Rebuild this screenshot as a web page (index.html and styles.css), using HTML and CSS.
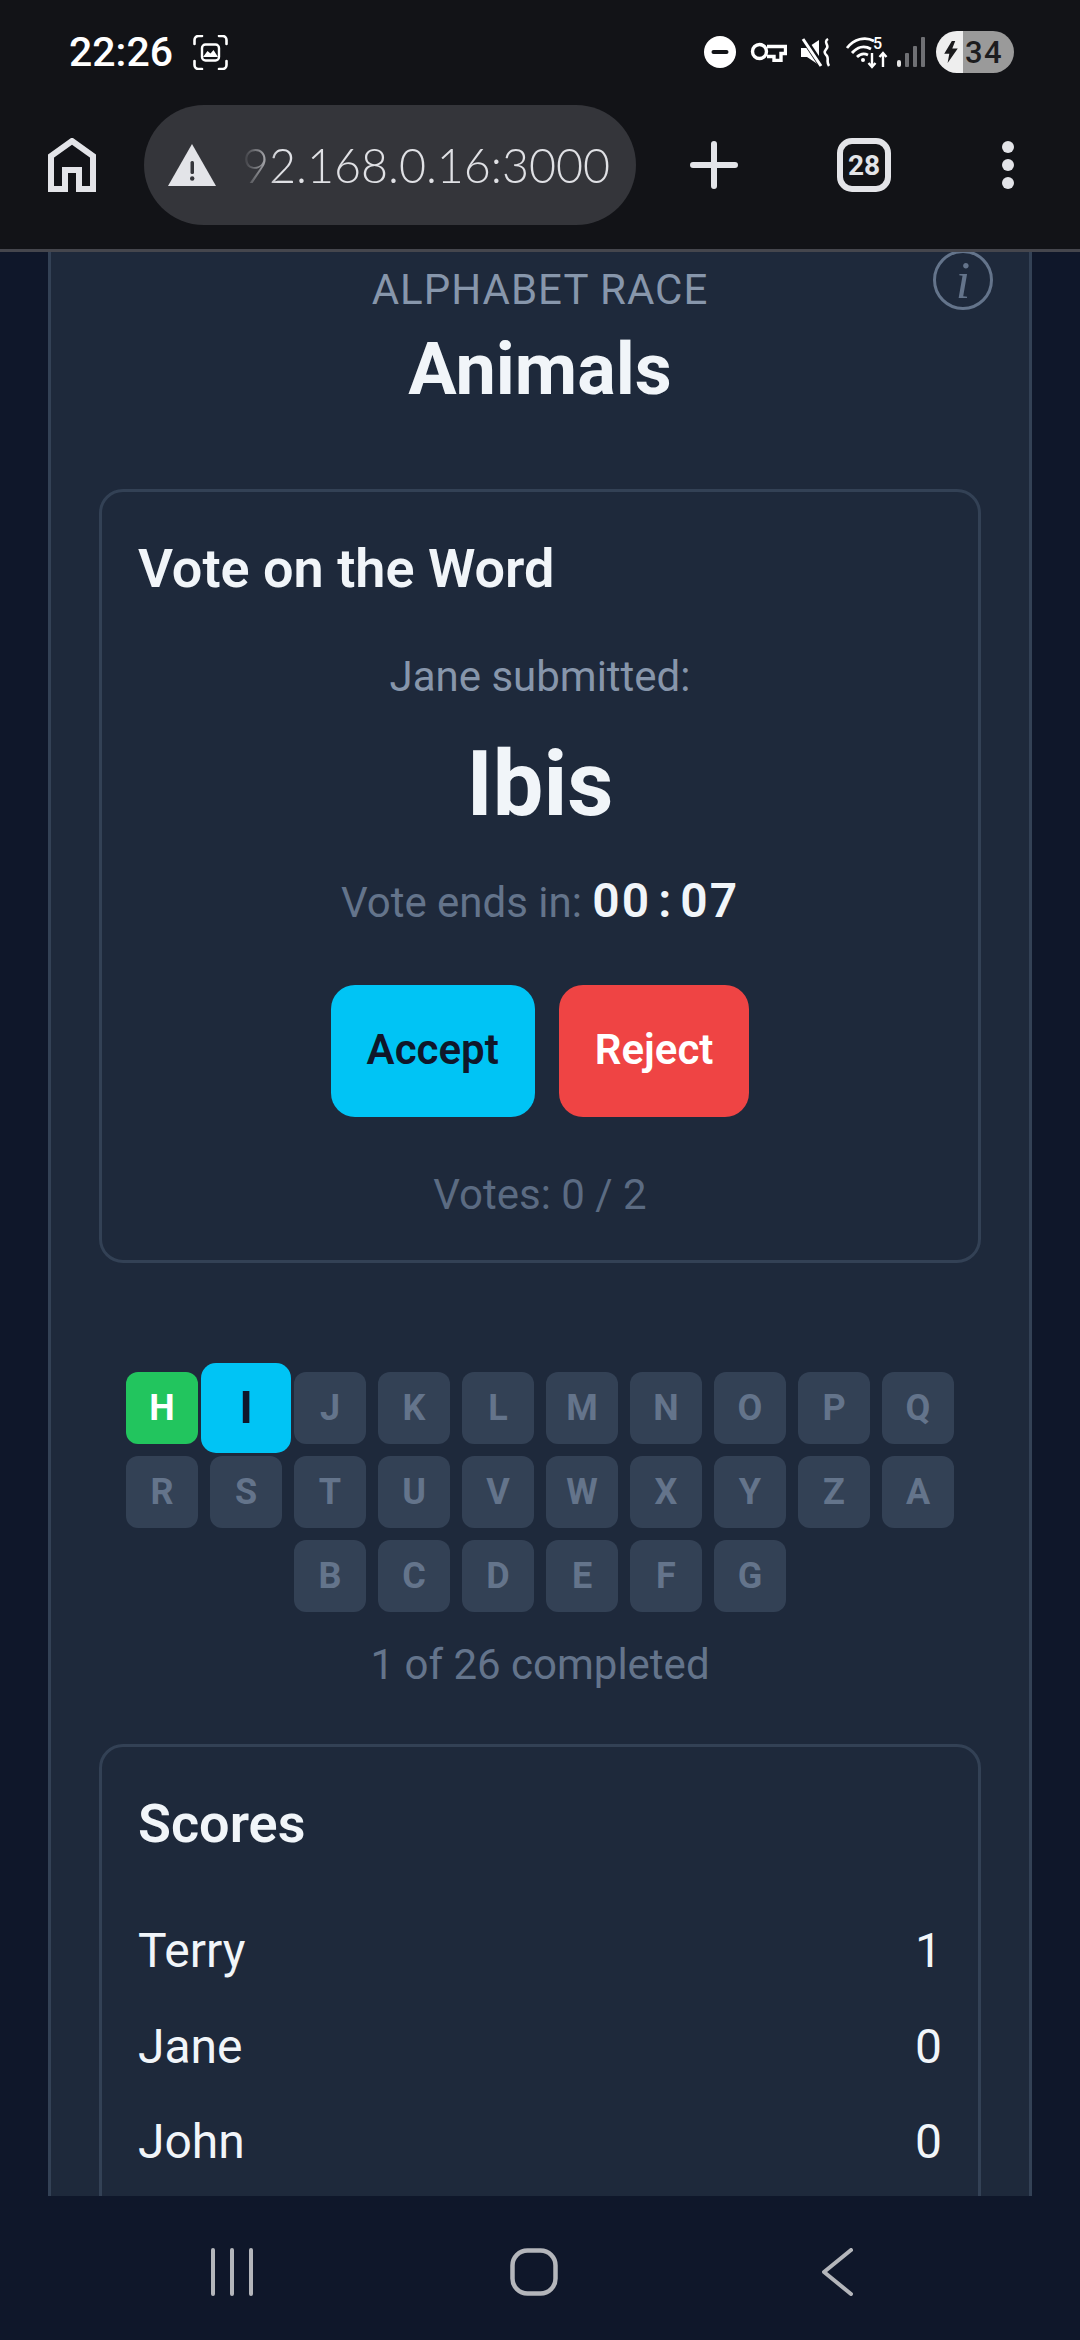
FILE: index.html
```html
<!DOCTYPE html>
<html lang="en">
<head>
    <meta charset="UTF-8">
    <meta name="viewport" content="width=device-width, initial-scale=1.0">
    <title>Alphabet Race</title>
    <link rel="stylesheet" href="styles.css">
</head>
<body>
    <div class="phone">
        <div class="status-bar">
            <div class="status-left">
                <span class="clock">22:26</span>
                <svg class="shot-icon" width="35" height="35" viewBox="0 0 35 35" fill="none" stroke="#fff" stroke-width="2.6" stroke-linecap="round">
                    <path d="M1.500 9V5a4 4 0 0 1 4-4H9M26 1h3.500a4 4 0 0 1 4 4v4M33.500 26v4a4 4 0 0 1-4 4H26M9 34H5.500a4 4 0 0 1-4-4v-4"/>
                    <rect x="9" y="9.500" width="17" height="16" rx="3.500" stroke-width="2.400"/>
                    <path d="M10 22l4.500-6 3 2.500 3-3.500 4.500 7z" fill="#fff" stroke="none"/>
                </svg>
            </div>
            <div class="status-icons">
                <svg width="32" height="32" viewBox="0 0 32 32"><circle cx="16" cy="16" r="16" fill="#fff"/><rect x="7.500" y="14" width="17" height="4" rx="2" fill="#121317"/></svg>
                <svg width="37" height="20" viewBox="0 0 37 20" fill="none" stroke="#fff" stroke-width="3.400">
                    <circle cx="9.500" cy="9.500" r="7"/>
                    <path d="M17 4.500H35.500V11.500H31V18.500H24V14.500H17"/>
                </svg>
                <svg width="30" height="29" viewBox="0 0 30 29" fill="none">
                    <path d="M0 10H6L18 2V27L6 19H0Z" fill="#fff"/>
                    <path d="M3 1L21 28" stroke="#121317" stroke-width="6"/>
                    <path d="M2 1L20 28" stroke="#fff" stroke-width="3"/>
                    <path d="M27 1C22 4 28 7 26 10C24 13 22 14 26 18C28 21 25 24 28 28" stroke="#fff" stroke-width="2.600"/>
                </svg>
                <svg class="wifi-icon" width="43" height="40" viewBox="0 -4 43 40" fill="none" stroke="#fff" stroke-width="2.800">
                    <path d="M2 12C9 3 20 0 29 5M7 17C12 11 19 9 26 13M12 21C15 18 19 17 23 19"/>
                    <circle cx="18" cy="24" r="2" fill="#fff" stroke="none"/>
                    <text class="wifi-num" x="28" y="13">5</text>
                    <path d="M27 17V31M23.500 27L27 31L30.500 27M38 31V17M34.500 21L38 17L41.500 21" stroke-width="2.400"/>
                </svg>
                <svg class="signal-icon" width="28" height="30" viewBox="0 0 28 30">
                    <rect x="0" y="23" width="4" height="7" rx="2" fill="#e6e6e6"/>
                    <rect x="8" y="16" width="4" height="14" rx="1" fill="#6f7074"/>
                    <rect x="16" y="9" width="4" height="21" rx="1" fill="#6f7074"/>
                    <rect x="24" y="0" width="4" height="30" rx="1" fill="#6f7074"/>
                </svg>
                <div class="battery">
                    <svg width="14" height="22" viewBox="0 0 16 26"><path d="M9 0L0 15H6L4 26L16 9H9.500L13 0Z" fill="#1a1a1c"/></svg>
                    <span class="battery-num">34</span>
                </div>
            </div>
        </div>

        <div class="toolbar">
            <svg class="home-icon" width="48" height="54" viewBox="0 0 48 54" fill="none" stroke="#e3e4e8" stroke-width="6">
                <path d="M3 51V18L24 3L45 18V51H31V32H17V51Z"/>
            </svg>
            <div class="url-pill">
                <svg class="warn-icon" width="48" height="42" viewBox="0 0 48 42">
                    <path d="M24 0L48 42H0Z" fill="#e3e4e8"/>
                    <rect x="22.500" y="17" width="3.500" height="13" rx="1.500" fill="#34353a"/>
                    <circle cx="24.200" cy="34.500" r="2.200" fill="#34353a"/>
                </svg>
                <div class="url-text">92.168.0.16:3000</div>
            </div>
            <svg class="plus-icon" width="48" height="48" viewBox="0 0 48 48" stroke="#e3e4e8" stroke-width="6" stroke-linecap="round">
                <path d="M24 3V45M3 24H45"/>
            </svg>
            <div class="tab-count">28</div>
            <svg class="menu-icon" width="12" height="48" viewBox="0 0 12 48" fill="#e3e4e8">
                <circle cx="6" cy="6" r="6"/><circle cx="6" cy="24" r="6"/><circle cx="6" cy="42" r="6"/>
            </svg>
        </div>

        <div class="viewport">
            <main class="game">
                <div class="info-btn">i</div>
                <p class="game-type">ALPHABET RACE</p>
                <h1 class="category">Animals</h1>

                <section class="card vote-card">
                    <h2 class="card-title">Vote on the Word</h2>
                    <p class="submitted">Jane submitted:</p>
                    <p class="word">Ibis</p>
                    <p class="timer">Vote ends in: <span class="timer-num">00<span class="timer-colon">:</span>07</span></p>
                    <div class="vote-buttons">
                        <button class="btn btn-accept" type="button">Accept</button>
                        <button class="btn btn-reject" type="button">Reject</button>
                    </div>
                    <p class="votes">Votes: 0 / 2</p>
                </section>

                <div class="letters">
                    <div class="tile tile-done">H</div>
                    <div class="tile tile-current">I</div>
                    <div class="tile">J</div>
                    <div class="tile">K</div>
                    <div class="tile">L</div>
                    <div class="tile">M</div>
                    <div class="tile">N</div>
                    <div class="tile">O</div>
                    <div class="tile">P</div>
                    <div class="tile">Q</div>
                    <div class="tile">R</div>
                    <div class="tile">S</div>
                    <div class="tile">T</div>
                    <div class="tile">U</div>
                    <div class="tile">V</div>
                    <div class="tile">W</div>
                    <div class="tile">X</div>
                    <div class="tile">Y</div>
                    <div class="tile">Z</div>
                    <div class="tile">A</div>
                    <div class="tile">B</div>
                    <div class="tile">C</div>
                    <div class="tile">D</div>
                    <div class="tile">E</div>
                    <div class="tile">F</div>
                    <div class="tile">G</div>
                </div>
                <p class="progress">1 of 26 completed</p>

                <section class="card scores-card">
                    <h2 class="card-title">Scores</h2>
                    <div class="score-list">
                        <div class="score-row"><span>Terry</span><span>1</span></div>
                        <div class="score-row"><span>Jane</span><span>0</span></div>
                        <div class="score-row"><span>John</span><span>0</span></div>
                    </div>
                </section>
            </main>
        </div>

        <div class="nav-bar">
            <svg width="42" height="48" viewBox="0 0 42 48" stroke="#b4b6bb" stroke-width="4" stroke-linecap="round">
                <path d="M2 2V46M21 2V46M40 2V46"/>
            </svg>
            <svg class="nav-home" width="48" height="48" viewBox="0 0 48 48" fill="none" stroke="#b4b6bb" stroke-width="4.500">
                <rect x="2.500" y="2.500" width="43" height="43" rx="15"/>
            </svg>
            <svg class="nav-back" width="31" height="48" viewBox="0 0 31 48" fill="none" stroke="#b4b6bb" stroke-width="4" stroke-linecap="round" stroke-linejoin="round">
                <path d="M29 2L2 24L29 46"/>
            </svg>
        </div>
    </div>
</body>
</html>
```

FILE: styles.css
```css
* {
    box-sizing: border-box;
}
body {
    margin: 0;
    background-color: #0f172a;
    font-family: Roboto, "Liberation Sans", sans-serif;
    color: #f1f5f9;
}
p, h1, h2 {
    margin: 0;
}
.phone {
    width: 1080px;
    height: 2340px;
    display: flex;
    flex-direction: column;
    overflow: hidden;
}

/* status bar */
.status-bar {
    height: 105px;
    flex: none;
    background-color: #121317;
    padding: 0 66px 1px 69px;
    display: flex;
    align-items: center;
    justify-content: space-between;
}
.status-left {
    display: flex;
    align-items: center;
    gap: 20px;
}
.clock {
    font-size: 41px;
    font-weight: 500;
    color: #fff;
}
.status-icons {
    display: flex;
    align-items: center;
    gap: 14px;
}
.wifi-num {
    font-family: Roboto, sans-serif;
    font-size: 16px;
    font-weight: 500;
    fill: #fff;
    stroke: none;
}
.signal-icon {
    margin-left: -5px;
}
.battery {
    margin-left: -3px;
    width: 78px;
    height: 42px;
    border-radius: 21px;
    background: linear-gradient(to right, #eeeeee 27px, #9a9a9a 27px);
    display: flex;
    align-items: center;
    padding-left: 8px;
    gap: 7px;
}
.battery-num {
    font-size: 31px;
    font-weight: 500;
    color: #1c1c1e;
    letter-spacing: 1.5px;
}

/* browser toolbar */
.toolbar {
    height: 147px;
    flex: none;
    background-color: #121317;
    border-bottom: 3px solid #45464d;
    padding: 0 66px 24px 48px;
    display: flex;
    align-items: center;
}
.url-pill {
    margin-left: 48px;
    width: 492px;
    height: 120px;
    border-radius: 60px;
    background-color: #34353a;
    padding: 0 26px 0 24px;
    display: flex;
    align-items: center;
}
.warn-icon {
    flex: none;
}
.url-text {
    margin-left: 26px;
    flex: 1;
    text-align: right;
    white-space: nowrap;
    font-family: Lato, Roboto, sans-serif;
    font-size: 46.6px;
    font-weight: 300;
    color: #e0e1e5;
    -webkit-mask-image: linear-gradient(to right, transparent 0, #000 36px);
    mask-image: linear-gradient(to right, transparent 0, #000 36px);
}
.plus-icon {
    margin-left: 54px;
}
.tab-count {
    margin-left: 99px;
    width: 54px;
    height: 54px;
    border: 6px solid #e3e4e8;
    border-radius: 15px;
    display: flex;
    align-items: center;
    justify-content: center;
    font-size: 28px;
    font-weight: 700;
    color: #e3e4e8;
}
.menu-icon {
    margin-left: 111px;
}

/* game */
.viewport {
    flex: 1;
    overflow: hidden;
}
.game {
    position: relative;
    margin: 0 48px;
    padding: 8px 48px 0;
    min-height: 100%;
    background-color: #1e293b;
    border-left: 3px solid #334155;
    border-right: 3px solid #334155;
}
.info-btn {
    position: absolute;
    top: -2px;
    right: 36px;
    width: 60px;
    height: 60px;
    border: 3px solid #64748b;
    border-radius: 50%;
    display: flex;
    align-items: center;
    justify-content: center;
    font-family: "Liberation Serif", serif;
    font-style: italic;
    font-size: 52px;
    color: #64748b;
}
.game-type {
    line-height: 60px;
    font-size: 42px;
    letter-spacing: 1px;
    color: #8796ab;
    text-align: center;
}
.category {
    margin-top: 5px;
    line-height: 90px;
    font-size: 72px;
    font-weight: 700;
    text-align: center;
}
.card {
    border: 3px solid #334155;
    border-radius: 24px;
    padding: 38px 36px 36px;
}
.vote-card {
    margin-top: 74px;
    padding-bottom: 35px;
    text-align: center;
}
.card-title {
    line-height: 78px;
    font-size: 54px;
    font-weight: 600;
    text-align: left;
}
.submitted {
    margin-top: 39px;
    line-height: 60px;
    font-size: 42px;
    color: #8796ab;
}
.word {
    margin-top: 18px;
    line-height: 120px;
    font-size: 90px;
    font-weight: 700;
}
.timer {
    margin-top: 26px;
    line-height: 60px;
    font-size: 42px;
    color: #64748b;
}
.timer-num {
    font-size: 48px;
    font-weight: 600;
    letter-spacing: 2px;
    color: #f1f5f9;
}
.timer-colon {
    margin: 0 7px;
}
.vote-buttons {
    margin-top: 52px;
    display: flex;
    justify-content: center;
    gap: 24px;
}
.btn {
    height: 132px;
    padding: 0 36px 3px;
    border: none;
    border-radius: 24px;
    font-family: Roboto, sans-serif;
    font-size: 42px;
    font-weight: 600;
}
.btn-accept {
    background-color: #00c4f5;
    color: #0f172a;
}
.btn-reject {
    background-color: #ef4444;
    color: #fff;
}
.votes {
    margin-top: 48px;
    line-height: 60px;
    font-size: 42px;
    color: #5b6b82;
}
.letters {
    margin: 109px auto 0;
    width: 828px;
    display: flex;
    flex-wrap: wrap;
    justify-content: center;
    gap: 12px;
}
.tile {
    width: 72px;
    height: 72px;
    border-radius: 12px;
    background-color: #334155;
    display: flex;
    align-items: center;
    justify-content: center;
    font-size: 36px;
    font-weight: 700;
    color: #64748b;
}
.tile-done {
    background-color: #22c55e;
    color: #fff;
}
.tile-current {
    background-color: #00c4f5;
    color: #0f172a;
    transform: scale(1.25);
}
.progress {
    margin-top: 23px;
    line-height: 60px;
    font-size: 42px;
    color: #64748b;
    text-align: center;
}
.scores-card {
    margin-top: 49px;
}
.score-list {
    margin-top: 40px;
}
.score-row {
    height: 95.5px;
    display: flex;
    align-items: center;
    justify-content: space-between;
    font-size: 48px;
}

/* android nav */
.nav-bar {
    height: 144px;
    flex: none;
    background-color: #0f172a;
    padding: 7px 0 0 211px;
    display: flex;
    align-items: center;
}
.nav-home {
    margin-left: 257px;
}
.nav-back {
    margin-left: 264px;
}
```
